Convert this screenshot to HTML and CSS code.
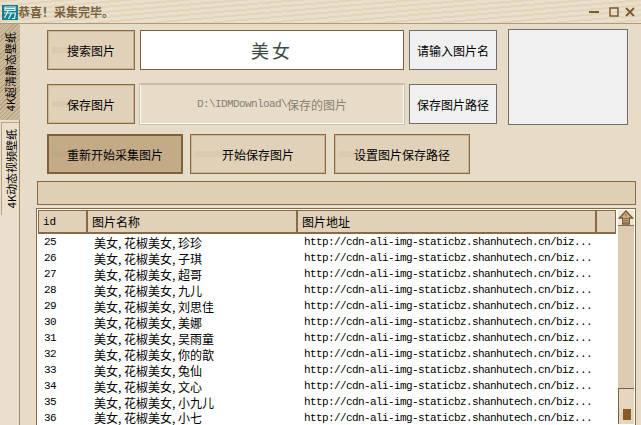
FILE: index.html
```html
<!DOCTYPE html>
<html lang="en">
<head>
    <meta charset="UTF-8">
    <title>采集</title>
    <link rel="stylesheet" href="styles.css">
</head>
<body>
<div class="window">
    <div class="titlebar">
        <svg class="logo" width="16" height="15" viewBox="0 0 16 15">
            <rect width="16" height="15" fill="#17808f"/>
            <path d="M3 2h10v3.500H3zM3 3.700h10M2 8h12M6 6l-3.500 7M9.500 8l-3 6M13.500 8l-1 5.500h-2.500" fill="none" stroke="#dff5f2" stroke-width="1.200"/>
        </svg>
        <span class="title">恭喜！采集完毕。</span>
        <div class="winbtns">
            <svg width="10" height="10" viewBox="0 0 10 10"><path d="M0 5h10" stroke="#7a5a34" stroke-width="2"/></svg>
            <svg width="10" height="10" viewBox="0 0 10 10"><rect x="1" y="1" width="8" height="8" fill="none" stroke="#7a5a34" stroke-width="1.500"/></svg>
            <svg class="win-close" width="10" height="10" viewBox="0 0 10 10"><path d="M1 1l8 8M9 1l-8 8" stroke="#7a5a34" stroke-width="1.800"/></svg>
        </div>
    </div>
    <div class="main">
        <div class="tabs">
            <div class="tab tab-active"><span>4K超清静态壁纸</span></div>
            <div class="tab tab-plain"><span>4K动态视频壁纸</span></div>
        </div>
        <div class="content">
            <div class="top">
                <div class="controls">
                    <div class="row">
                        <div class="btn btn-side">搜索图片</div>
                        <div class="search">美女</div>
                        <div class="btn-grey">请输入图片名</div>
                    </div>
                    <div class="row">
                        <div class="btn btn-side">保存图片</div>
                        <div class="path"><span class="path-latin">D:\IDMDownload\</span>保存的图片</div>
                        <div class="btn-grey">保存图片路径</div>
                    </div>
                </div>
                <div class="preview"></div>
            </div>
            <div class="actions">
                <div class="btn btn-wide btn-pressed">重新开始采集图片</div>
                <div class="btn btn-wide">开始保存图片</div>
                <div class="btn btn-wide">设置图片保存路径</div>
            </div>
            <div class="progress"></div>
            <div class="list">
                <div class="table">
                    <div class="thead">
                        <div class="th th-id">id</div>
                        <div class="th th-name">图片名称</div>
                        <div class="th th-url">图片地址</div>
                        <div class="th th-end"></div>
                    </div>
                    <div class="tr"><span class="td-id">25</span><span class="td-name">美女<i>,</i>花椒美女<i>,</i>珍珍</span><span class="td-url">http://cdn-ali-img-staticbz.shanhutech.cn/biz...</span></div>
                    <div class="tr"><span class="td-id">26</span><span class="td-name">美女<i>,</i>花椒美女<i>,</i>子琪</span><span class="td-url">http://cdn-ali-img-staticbz.shanhutech.cn/biz...</span></div>
                    <div class="tr"><span class="td-id">27</span><span class="td-name">美女<i>,</i>花椒美女<i>,</i>超哥</span><span class="td-url">http://cdn-ali-img-staticbz.shanhutech.cn/biz...</span></div>
                    <div class="tr"><span class="td-id">28</span><span class="td-name">美女<i>,</i>花椒美女<i>,</i>九儿</span><span class="td-url">http://cdn-ali-img-staticbz.shanhutech.cn/biz...</span></div>
                    <div class="tr"><span class="td-id">29</span><span class="td-name">美女<i>,</i>花椒美女<i>,</i>刘思佳</span><span class="td-url">http://cdn-ali-img-staticbz.shanhutech.cn/biz...</span></div>
                    <div class="tr"><span class="td-id">30</span><span class="td-name">美女<i>,</i>花椒美女<i>,</i>美娜</span><span class="td-url">http://cdn-ali-img-staticbz.shanhutech.cn/biz...</span></div>
                    <div class="tr"><span class="td-id">31</span><span class="td-name">美女<i>,</i>花椒美女<i>,</i>吴雨童</span><span class="td-url">http://cdn-ali-img-staticbz.shanhutech.cn/biz...</span></div>
                    <div class="tr"><span class="td-id">32</span><span class="td-name">美女<i>,</i>花椒美女<i>,</i>你的歆</span><span class="td-url">http://cdn-ali-img-staticbz.shanhutech.cn/biz...</span></div>
                    <div class="tr"><span class="td-id">33</span><span class="td-name">美女<i>,</i>花椒美女<i>,</i>兔仙</span><span class="td-url">http://cdn-ali-img-staticbz.shanhutech.cn/biz...</span></div>
                    <div class="tr"><span class="td-id">34</span><span class="td-name">美女<i>,</i>花椒美女<i>,</i>文心</span><span class="td-url">http://cdn-ali-img-staticbz.shanhutech.cn/biz...</span></div>
                    <div class="tr"><span class="td-id">35</span><span class="td-name">美女<i>,</i>花椒美女<i>,</i>小九儿</span><span class="td-url">http://cdn-ali-img-staticbz.shanhutech.cn/biz...</span></div>
                    <div class="tr"><span class="td-id">36</span><span class="td-name">美女<i>,</i>花椒美女<i>,</i>小七</span><span class="td-url">http://cdn-ali-img-staticbz.shanhutech.cn/biz...</span></div>
                </div>
                <div class="scrollbar">
                    <svg class="arrow" width="16" height="16" viewBox="0 0 16 16">
                        <path d="M8 1l7 7.500h-3.500V15h-7V8.500H1z" fill="#cdb48c" stroke="#7a5a34" stroke-width="1.500"/>
                        <path d="M6 9h4M6 11h4M6 13h4M8 4v3" stroke="#7a5a34"/>
                    </svg>
                    <div class="track"></div>
                    <div class="thumb"><div class="grip"></div></div>
                </div>
            </div>
        </div>
    </div>
</div>
</body>
</html>
```

FILE: styles.css
```css
* {
    box-sizing: border-box;
}
html, body {
    margin: 0;
    height: 100%;
    overflow: hidden;
}
body {
    font-family: "Noto Sans CJK SC", sans-serif;
    font-size: 12px;
    color: #000;
    background-color: #e6dcc8;
}
.window {
    height: 425px;
    display: flex;
    flex-direction: column;
}
.titlebar {
    height: 24px;
    flex: none;
    display: flex;
    align-items: center;
    padding: 0 6px 0 2px;
    border-bottom: 1px solid #b09a78;
    background-color: #eadfca;
    background-image: repeating-linear-gradient(175deg, rgba(190, 165, 125, 0.18) 0, rgba(190, 165, 125, 0.18) 2px, transparent 2px, transparent 5px);
}
.logo {
    flex: none;
    margin-top: 1px;
}
.title {
    font-weight: bold;
    color: #7a6240;
}
.winbtns {
    margin-left: auto;
    display: flex;
    gap: 10px;
}
.win-close {
    margin-left: -4px;
}
.main {
    flex: 1;
    display: flex;
    min-height: 0;
}
.tabs {
    width: 20px;
    flex: none;
    display: flex;
    flex-direction: column;
    background-color: #eadfce;
    border-right: 1px solid #a58a64;
}
.tab {
    display: flex;
    align-items: center;
    justify-content: center;
}
.tab span {
    writing-mode: vertical-rl;
    text-orientation: sideways;
    transform: rotate(180deg);
    white-space: nowrap;
    font-size: 11px;
    line-height: 18px;
}
.tab-active {
    height: 96px;
    margin-right: -1px;
    background-color: #cdbb9d;
    background-image: repeating-linear-gradient(135deg, rgba(120, 95, 60, 0.28) 0, rgba(120, 95, 60, 0.28) 1px, transparent 1px, transparent 3px);
}
.tab-plain {
    height: 93px;
    margin: 2px 0 0 1px;
    background-color: #e9dfcb;
    border-top: 1px solid #b8a282;
    border-left: 1px solid #b8a282;
}
.content {
    flex: 1;
    min-width: 0;
    display: flex;
    flex-direction: column;
    padding: 5px 5px 0 16px;
}
.top {
    display: flex;
    padding-left: 11px;
}
.controls {
    display: flex;
    flex-direction: column;
    gap: 14px;
    padding-top: 1px;
}
.row {
    display: flex;
    gap: 5px;
}
.btn {
    display: flex;
    align-items: center;
    justify-content: center;
    height: 40px;
    background-color: #e0d1b8;
    background-image: linear-gradient(rgba(165, 140, 105, 0.1), rgba(165, 140, 105, 0.1));
    background-repeat: no-repeat;
    background-size: 30px 6px;
    background-position: 4px 50%;
    border: 1px solid #8a6a44;
    box-shadow: inset 0 0 0 1px #c9b594;
}
.btn-side {
    width: 88px;
}
.search {
    width: 264px;
    height: 40px;
    display: flex;
    align-items: center;
    justify-content: center;
    font-size: 18px;
    letter-spacing: 3px;
    color: #3c4c44;
    background-color: #fff;
    border: 1px solid #7f5f3c;
}
.path {
    width: 264px;
    height: 40px;
    display: flex;
    align-items: center;
    justify-content: center;
    color: #8a8070;
    background-color: #e6dcc8;
    border: 1px solid #fffdf6;
    border-top-color: #cdbfa5;
    box-shadow: 0 0 0 1px #cbbda2;
}
.path-latin {
    font-family: "Liberation Mono", monospace;
    font-size: 11px;
    letter-spacing: -0.600px;
}
.btn-grey {
    width: 88px;
    height: 40px;
    display: flex;
    align-items: center;
    justify-content: center;
    background-color: #f0f0f0;
    border: 1px solid #6e6e6e;
}
.preview {
    width: 120px;
    height: 96px;
    margin-left: 11px;
    background-color: #f0f0f0;
    border: 1px solid #6e6e6e;
}
.actions {
    display: flex;
    gap: 7px;
    margin-top: 9px;
    padding-left: 11px;
}
.btn-wide {
    width: 136px;
}
.btn-wide:last-child {
    margin-left: 1px;
}
.btn-pressed {
    background-color: #c4ab88;
    border: 2px solid #7f5f3c;
    box-shadow: none;
}
.progress {
    height: 24px;
    margin: 7px 0 3px 1px;
    background-color: #dfcfb5;
    border: 1px solid #8a6a44;
}
.list {
    flex: 1;
    min-height: 0;
    display: flex;
    gap: 2px;
    padding: 1px;
    background-color: #fff;
    border: 1px solid #8a6a44;
    border-bottom: none;
    overflow: hidden;
}
.table {
    flex: 1;
    min-width: 0;
}
.thead {
    display: flex;
    height: 24px;
    background-color: #e0d1b8;
    border: 1px solid #8a6a44;
    border-bottom-width: 2px;
}
.th {
    display: flex;
    align-items: center;
    padding-left: 4px;
    border-right: 2px solid #8a6a44;
}
.th-id {
    width: 49px;
    font-family: "Liberation Mono", monospace;
    font-size: 11px;
}
.th-name {
    width: 210px;
}
.th-url {
    width: 299px;
}
.th-end {
    flex: 1;
    border-right: none;
}
.tr {
    display: flex;
    height: 16px;
    align-items: center;
    white-space: nowrap;
    overflow: hidden;
}
.tr:last-child {
    height: 15px;
}
.td-id {
    width: 50px;
    padding-left: 6px;
    font-family: "Liberation Mono", monospace;
    font-size: 11px;
    letter-spacing: -0.600px;
}
.td-name {
    width: 210px;
    padding-left: 6px;
}
.td-name i {
    display: inline-block;
    width: 6px;
    font-style: normal;
}
.td-url {
    padding-left: 6px;
    font-family: "Liberation Mono", monospace;
    font-size: 11px;
    letter-spacing: -0.600px;
}
.scrollbar {
    width: 16px;
    flex: none;
    display: flex;
    flex-direction: column;
    background-color: #dccbb0;
}
.arrow {
    flex: none;
    background-color: #eee6d6;
    border-bottom: 1px solid #8a6a44;
}
.track {
    flex: 1;
}
.thumb {
    height: 36px;
    flex: none;
    background-color: #e4d6bf;
    border: 1px solid #7f5f3c;
    border-bottom: none;
    border-right: none;
    display: flex;
    justify-content: center;
    padding-top: 20px;
}
.grip {
    width: 8px;
    height: 11px;
    background-color: #8a5a24;
}
```
